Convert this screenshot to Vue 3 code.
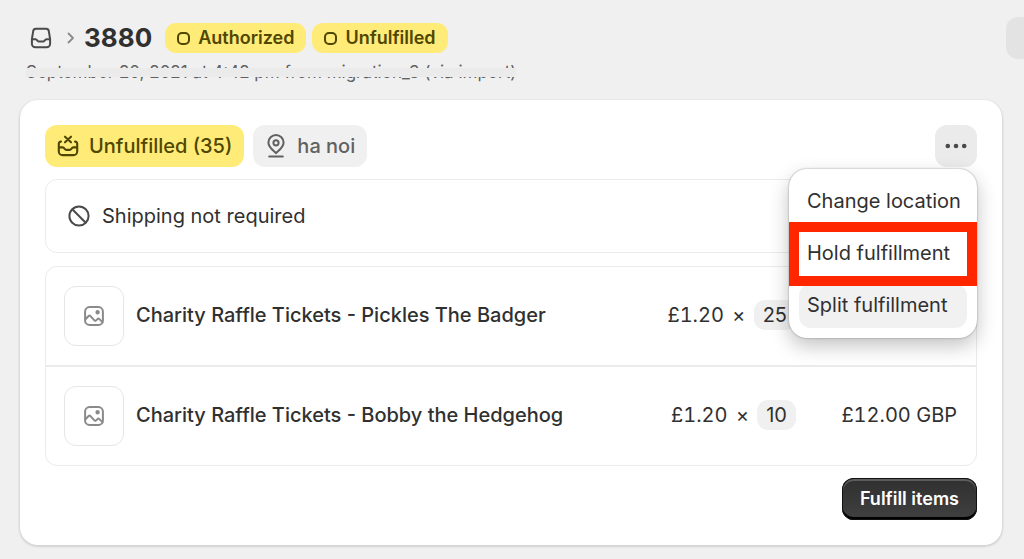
<script setup>
import { ref } from 'vue'

const items = ref([
  { name: 'Charity Raffle Tickets - Pickles The Badger', price: '£1.20', qty: 25, total: '' },
  { name: 'Charity Raffle Tickets - Bobby the Hedgehog', price: '£1.20', qty: 10, total: '£12.00 GBP' }
])
</script>

<template>
  <main class="page">
    <header class="top">
      <div class="title-row">
        <a class="crumb" href="#" aria-label="Orders">
          <svg width="22" height="22" viewBox="0 0 22 22" fill="none" stroke="currentColor" stroke-width="2" stroke-linejoin="round" stroke-linecap="round">
            <path d="M6 1.800h10a2.800 2.800 0 0 1 2.800 2.400l1.300 8v4.500a3.500 3.500 0 0 1-3.500 3.500H5.400a3.500 3.500 0 0 1-3.500-3.500v-4.500l1.300-8A2.800 2.800 0 0 1 6 1.800z" />
            <path d="M2 12.200h3.600c1.500 0 1.700 2.400 3.400 2.400h4c1.700 0 1.900-2.400 3.400-2.400H20" />
          </svg>
        </a>
        <svg class="chevron" width="8" height="12" viewBox="0 0 8 12" fill="none" stroke="currentColor" stroke-width="1.800" stroke-linecap="round" stroke-linejoin="round"><path d="M1.500 1.500 6 6l-4.500 4.500" /></svg>
        <h1>3880</h1>
        <span class="status"><i class="ring"></i>Authorized</span>
        <span class="status"><i class="ring"></i>Unfulfilled</span>
      </div>
      <p class="date">September 20, 2021 at 4:42 pm from migration_3 (via import)</p>
      <button class="edge" type="button" aria-label="Page actions"></button>
    </header>

    <section class="card">
      <div class="card-head">
        <span class="tag yellow">
          <svg width="22" height="22" viewBox="0 0 22 22" fill="none" stroke="currentColor" stroke-width="2.100" stroke-linecap="round" stroke-linejoin="round">
            <path d="m8 1.700 6 5.600m0-5.600L8 7.300" />
            <path d="M4 6.600c-1.500 0-2.200.8-2.200 2.200v7.600a3.700 3.700 0 0 0 3.700 3.700h11a3.700 3.700 0 0 0 3.700-3.700V8.800c0-1.400-.7-2.200-2.200-2.200" />
            <path d="M2.200 12.400h3.600c1.600 0 1.800 2.500 3.500 2.500h3.400c1.700 0 1.900-2.500 3.500-2.500h3.600" />
          </svg>
          Unfulfilled (35)
        </span>
        <span class="tag grey">
          <svg width="22" height="24" viewBox="0 0 22 24" fill="none" stroke="currentColor" stroke-width="2" stroke-linecap="round" stroke-linejoin="round">
            <path d="M11 19.200c-1.500-1.800-7.600-5.300-7.600-10.600a7.600 7.600 0 0 1 15.200 0c0 5.300-6.100 8.800-7.600 10.600z" />
            <circle cx="11" cy="8.800" r="2.600" />
            <path d="M4.200 22.600h13.600" />
          </svg>
          ha noi
        </span>
        <div class="menu-anchor">
          <button class="more" type="button" aria-label="More actions" aria-expanded="true">
            <svg width="22" height="6" viewBox="0 0 22 6" fill="currentColor"><circle cx="2.800" cy="3" r="2.300" /><circle cx="11" cy="3" r="2.300" /><circle cx="19.200" cy="3" r="2.300" /></svg>
          </button>
          <div class="menu" role="menu">
            <button type="button" role="menuitem">Change location</button>
            <button type="button" role="menuitem" class="marked">Hold fulfillment</button>
            <button type="button" role="menuitem" class="hovered">Split fulfillment</button>
          </div>
        </div>
      </div>

      <div class="shipping">
        <svg width="22" height="22" viewBox="0 0 22 22" fill="none" stroke="currentColor" stroke-width="2"><circle cx="11" cy="11" r="9.600" /><path d="m4.300 4.300 13.400 13.400" /></svg>
        Shipping not required
      </div>

      <div class="lines">
        <table>
          <tbody>
            <tr v-for="item in items" :key="item.name">
              <td class="pic">
                <div class="thumb">
                  <svg width="20" height="20" viewBox="0 0 20 20" fill="none" stroke="currentColor" stroke-width="2" stroke-linejoin="round" stroke-linecap="round">
                    <rect x="1.100" y="1.100" width="17.800" height="17.800" rx="4.500" />
                    <path d="M1.500 13.200 4.600 10q1-.9 1.900.1l3.900 4.300q.9.900 1.800 0l1.300-1.300q1-.9 1.900 0l3 3" />
                    <circle cx="13.600" cy="6.300" r="1.200" fill="currentColor" />
                  </svg>
                </div>
              </td>
              <td class="name">{{ item.name }}</td>
              <td class="price">{{ item.price }} <span class="times">×</span> <span class="qty">{{ item.qty }}</span></td>
              <td class="total">{{ item.total }}</td>
            </tr>
          </tbody>
        </table>
      </div>

      <footer><button class="primary" type="button">Fulfill items</button></footer>
    </section>
  </main>
</template>

<style>
body {
  background: #f0f0f0;
}
</style>

<style scoped>
.page {
  box-sizing: border-box;
  min-height: 100vh;
  padding: 20px 22px 14px 20px;
  overflow: hidden;
  background: #f0f0f0;
  color: #303030;
  font-family: Inter, "Liberation Sans", sans-serif;
  font-size: 20px;
  line-height: 24px;
}
button {
  font: inherit;
  color: inherit;
  border: 0;
}
svg {
  display: block;
  flex: none;
}
.top {
  position: relative;
  height: 80px;
}
.title-row {
  display: flex;
  align-items: center;
  height: 36px;
  padding-left: 10px;
}
.crumb {
  color: #4a4a4a;
}
.chevron {
  margin: 0 9px 0 15px;
  color: #8a8a8a;
}
h1 {
  margin: 0 13px 0 0;
  font-size: 26px;
  line-height: 36px;
  font-weight: 650;
}
.status {
  display: flex;
  align-items: center;
  gap: 8px;
  height: 30px;
  padding: 0 12px;
  margin-right: 6px;
  border-radius: 11px;
  background: #ffeb78;
  color: #4f4700;
  font-size: 18px;
  font-weight: 600;
}
.ring {
  box-sizing: border-box;
  width: 13px;
  height: 13px;
  border: 2px solid currentColor;
  border-radius: 5px;
}
.date {
  position: relative;
  width: max-content;
  margin: 4px 0 0 6px;
  font-size: 17px;
  color: #616161;
}
.date::after {
  content: "";
  position: absolute;
  inset: 8px 0 7px;
  background: #ebebeb;
}
.edge {
  position: absolute;
  top: -3px;
  right: -64px;
  width: 60px;
  height: 42px;
  border-radius: 12px;
  background: #e3e3e3;
}
.card {
  padding: 25px;
  border-radius: 18px;
  background: #fff;
  box-shadow: 0 1px 2px 1px rgba(0, 0, 0, 0.12);
}
.card-head {
  display: flex;
  gap: 9px;
}
.tag {
  display: flex;
  align-items: center;
  gap: 10px;
  height: 42px;
  padding: 0 12px;
  border-radius: 12px;
  font-weight: 500;
}
.yellow {
  background: #ffeb78;
  color: #4f4700;
}
.grey {
  background: #f0f0f0;
  color: #616161;
}
.menu-anchor {
  position: relative;
  margin-left: auto;
}
.more {
  display: grid;
  place-items: center;
  width: 42px;
  height: 42px;
  padding: 0;
  border-radius: 12px;
  background: #ebebeb;
  color: #4a4a4a;
}
.menu {
  position: absolute;
  top: 44px;
  right: 0;
  z-index: 2;
  box-sizing: border-box;
  width: 188px;
  padding: 11px 10px 10px;
  border-radius: 18px;
  background: #fff;
  box-shadow: 0 0 2px rgba(0, 0, 0, 0.4), 0 8px 20px rgba(0, 0, 0, 0.24);
}
.menu button {
  display: block;
  width: 100%;
  height: 44px;
  margin-bottom: 8px;
  padding: 0 8px 2px;
  background: #fff;
  border-radius: 12px;
  text-align: left;
  white-space: nowrap;
}
.menu .marked {
  position: relative;
  border-radius: 0;
  box-shadow: 0 0 0 10px #ff2600;
}
.menu .hovered {
  margin-bottom: 0;
  background: #f1f1f1;
}
.shipping {
  display: flex;
  align-items: center;
  gap: 12px;
  height: 72px;
  margin: 12px 0 13px;
  padding: 0 22px;
  border: 1px solid #ebebeb;
  border-radius: 12px;
}
.shipping svg {
  color: #4a4a4a;
}
.lines {
  border: 1px solid #ebebeb;
  border-radius: 12px;
}
table {
  width: 100%;
  table-layout: fixed;
  border-collapse: collapse;
}
tr + tr {
  border-top: 2px solid #ebebeb;
}
td {
  box-sizing: border-box;
  height: 99px;
  padding: 0 0 3px;
}
.pic {
  width: 90px;
  padding: 0;
}
.thumb {
  box-sizing: border-box;
  display: grid;
  place-items: center;
  width: 60px;
  height: 60px;
  margin-left: 18px;
  border: 1px solid #e6e6e6;
  border-radius: 12px;
  color: #8a8a8a;
}
.name {
  font-weight: 500;
}
.price {
  width: 160px;
  text-align: right;
  white-space: nowrap;
  font-variant-numeric: tabular-nums;
}
.times {
  margin: 0 3px;
}
.qty {
  display: inline-block;
  padding: 3px 9px;
  border-radius: 11px;
  background: #f0f0f0;
  font-variant-numeric: normal;
}
.total {
  width: 180px;
  padding-right: 19px;
  text-align: right;
  white-space: nowrap;
  font-variant-numeric: tabular-nums;
}
footer {
  display: flex;
  justify-content: flex-end;
  margin-top: 12px;
}
.primary {
  height: 42px;
  padding: 0 18px;
  border-radius: 12px;
  background: linear-gradient(#303030, #404040);
  box-shadow: inset 0 0 0 1px #111, inset 0 2px 0 1px #5c5c5c, inset 0 -3px 0 #000;
  color: #fff;
  font-size: 18px;
  font-weight: 600;
}
</style>
